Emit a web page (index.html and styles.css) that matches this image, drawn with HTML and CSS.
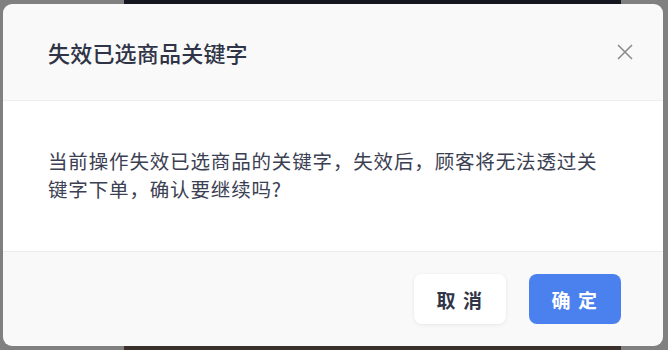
FILE: index.html
```html
<!DOCTYPE html>
<html lang="zh-CN">
<head>
<meta charset="utf-8">
<title>失效已选商品关键字</title>
<link rel="stylesheet" href="styles.css">
</head>
<body>
<div class="backdrop"><div class="backdrop-photo"></div></div>
<div class="overlay">
  <div class="modal">
    <div class="modal-header">
      <h2 class="modal-title">失效已选商品关键字</h2>
      <button class="close" aria-label="关闭">
        <svg width="16" height="16" viewBox="0 0 16 16"><path d="M1 1 L15 15 M15 1 L1 15" stroke="#8c8c8c" stroke-width="1.6" fill="none"/></svg>
      </button>
    </div>
    <div class="modal-body">
      <p class="message">当前操作失效已选商品的关键字，失效后，顾客将无法透过关键字下单，确认要继续吗?</p>
    </div>
    <div class="modal-footer">
      <button class="btn btn-cancel">取 消</button>
      <button class="btn btn-ok">确 定</button>
    </div>
  </div>
</div>
</body>
</html>
```
FILE: styles.css
```css
* { box-sizing: border-box; }
html, body {
  margin: 0;
  width: 668px;
  height: 350px;
  overflow: hidden;
  background: #808080;
  font-family: "Noto Sans CJK SC", "Noto Sans", sans-serif;
}
.backdrop {
  position: absolute;
  inset: 0;
  display: flex;
  justify-content: flex-start;
  padding-left: 124px;
}
.backdrop-photo {
  width: 497px;
  height: 100%;
  background: linear-gradient(#15161f 0%, #1f1d22 50%, #3a302c 100%);
}
.overlay {
  position: absolute;
  inset: 0;
  padding: 4px 5px 4px 3px;
}
.modal {
  width: 660px;
  height: 342px;
  border-radius: 9px;
  background: #f9f9f9;
  overflow: hidden;
  display: flex;
  flex-direction: column;
}
.modal-header {
  height: 97px;
  display: flex;
  align-items: center;
  justify-content: space-between;
  padding: 0 30px 0 45px;
  border-bottom: 1px solid #eeeeee;
}
.modal-title {
  margin: 0;
  font-size: 22px;
  line-height: 30px;
  font-weight: 500;
  letter-spacing: 0.2px;
  color: #2f3446;
}
.close {
  border: 0;
  background: none;
  padding: 0;
  width: 16px;
  height: 16px;
  display: flex;
}
.modal-body {
  height: 150px;
  background: #ffffff;
  display: flex;
  align-items: center;
  padding: 0 48px 2px 45px;
}
.message {
  margin: 0;
  font-size: 19.5px;
  line-height: 28px;
  letter-spacing: 0.85px;
  color: #3b4053;
}
.modal-footer {
  flex: 1;
  border-top: 1px solid #ececec;
  display: flex;
  justify-content: flex-end;
  align-items: center;
  gap: 23px;
  padding-right: 42px;
}
.btn {
  width: 92px;
  height: 50px;
  border-radius: 8px;
  border: 0;
  font-family: inherit;
  font-size: 19px;
  font-weight: 700;
  letter-spacing: 1.5px;
}
.btn-cancel {
  background: #ffffff;
  color: #2f3446;
  box-shadow: 0 1px 4px rgba(0, 0, 0, 0.08);
}
.btn-ok {
  background: #4b81ee;
  color: #ffffff;
}
```
